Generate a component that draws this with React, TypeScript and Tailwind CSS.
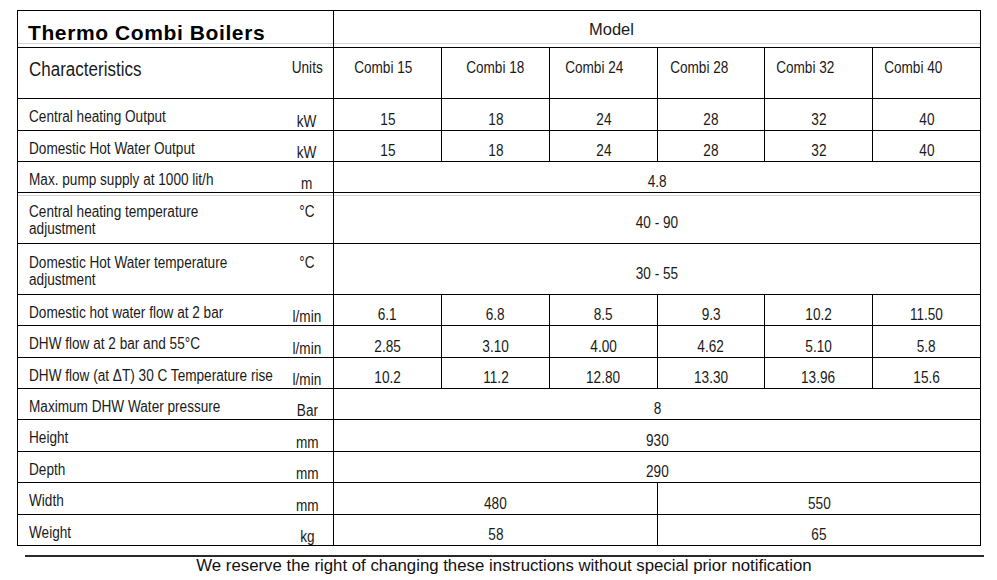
type Cell = [string, number];
type Row = { label: string[]; unit: string; cells: Cell[] };

const each = (vals: string[]): Cell[] => vals.map((v) => [v, 1] as Cell);

const rows: Row[] = [
  { label: ['Central heating Output'], unit: 'kW', cells: each(['15', '18', '24', '28', '32', '40']) },
  { label: ['Domestic Hot Water Output'], unit: 'kW', cells: each(['15', '18', '24', '28', '32', '40']) },
  { label: ['Max. pump supply at 1000 lit/h'], unit: 'm', cells: [['4.8', 6]] },
  { label: ['Central heating temperature', 'adjustment'], unit: '°C', cells: [['40 - 90', 6]] },
  { label: ['Domestic Hot Water temperature', 'adjustment'], unit: '°C', cells: [['30 - 55', 6]] },
  { label: ['Domestic hot water flow at 2 bar'], unit: 'l/min', cells: each(['6.1', '6.8', '8.5', '9.3', '10.2', '11.50']) },
  { label: ['DHW flow at 2 bar and 55°C'], unit: 'l/min', cells: each(['2.85', '3.10', '4.00', '4.62', '5.10', '5.8']) },
  { label: ['DHW flow (at ΔT) 30 C Temperature rise'], unit: 'l/min', cells: each(['10.2', '11.2', '12.80', '13.30', '13.96', '15.6']) },
  { label: ['Maximum DHW Water pressure'], unit: 'Bar', cells: [['8', 6]] },
  { label: ['Height'], unit: 'mm', cells: [['930', 6]] },
  { label: ['Depth'], unit: 'mm', cells: [['290', 6]] },
  { label: ['Width'], unit: 'mm', cells: [['480', 3], ['550', 3]] },
  { label: ['Weight'], unit: 'kg', cells: [['58', 3], ['65', 3]] },
];

const spanClass: Record<number, string> = { 1: '', 3: 'col-span-3', 6: 'col-span-6' };

const models = [
  { name: 'Combi 15', cls: 'pr-[9px]' },
  { name: 'Combi 18', cls: 'pr-[0px]' },
  { name: 'Combi 24', cls: 'pr-[18px]' },
  { name: 'Combi 28', cls: 'pr-[24px]' },
  { name: 'Combi 32', cls: 'pr-[26px]' },
  { name: 'Combi 40', cls: 'pr-[26px]' },
];

const gapLine = 'shadow-[inset_0_2px_0_#fff,inset_0_3px_0_#d4d4d4]';

// the sheet uses a condensed Arial; squeeze Liberation Sans to match
function Narrow({ children, left }: { children: React.ReactNode; left?: boolean }) {
  return (
    <span className={`inline-block whitespace-nowrap scale-x-[0.85] ${left ? 'origin-left' : 'origin-center'}`}>
      {children}
    </span>
  );
}

export default function App() {
  return (
    <div className="w-[997px] h-[580px] bg-white text-[#1a1a1a] overflow-hidden font-['Liberation_Sans',Arial,sans-serif]">
      <div className="pt-[10px] pl-[17px]">
        <div className="w-[964px] grid gap-px bg-black border border-black grid-cols-[315px_107px_107px_107px_106px_107px_107px] grid-rows-[36px_50px_31px_30px_30px_50px_50px_30px_31px_30px_30px_31px_30px_31px_30px]">
          {/* title row */}
          <div className="bg-white pl-[10px] pt-[11px] shadow-[inset_0_-3px_0_#fff,inset_0_-4px_0_#d4d4d4]">
            <div className="font-bold text-[21px] leading-[21px] tracking-[0.6px] text-black">Thermo Combi Boilers</div>
          </div>
          <div className="col-span-6 bg-white pt-[10px] text-center pr-[91px] shadow-[inset_0_-3px_0_#fff,inset_0_-4px_0_#d4d4d4]">
            <div className="text-[16.5px] leading-[16px]">Model</div>
          </div>

          {/* header row */}
          <div className="bg-white flex pl-[11px]">
            <div className="flex-1 min-w-0 pt-[11px] text-[20px] leading-[20px]">
              <Narrow left>Characteristics</Narrow>
            </div>
            <div className="w-[52px] shrink-0 text-center pt-[12px] text-[16px] leading-[16px]">
              <Narrow>Units</Narrow>
            </div>
          </div>
          {models.map((m) => (
            <div key={m.name} className={`bg-white text-center pt-[12px] text-[16px] leading-[16px] ${m.cls}`}>
              <Narrow>{m.name}</Narrow>
            </div>
          ))}

          {/* data rows */}
          {rows.map((r, i) => {
            const tall = r.label.length > 1;
            const extra = i === 3 ? gapLine : '';
            return [
              <div key={`l${i}`} className={`bg-white flex pl-[11px] text-[16px] ${extra}`}>
                <div className={`flex-1 min-w-0 self-center ${tall ? 'pt-[3px] leading-[17px]' : 'pt-[5px] leading-[16px]'}`}>
                  {r.label.map((t) => (
                    <div key={t}>
                      <Narrow left>{t}</Narrow>
                    </div>
                  ))}
                </div>
                <div className={`w-[52px] shrink-0 text-center leading-[16px] ${tall ? 'self-start mt-[11px]' : 'self-end'}`}>
                  <Narrow>{r.unit}</Narrow>
                </div>
              </div>,
              ...r.cells.map(([v, span], j) => (
                <div
                  key={`v${i}-${j}`}
                  className={`bg-white flex items-center justify-center pt-[10px] text-[16px] leading-[16px] ${spanClass[span]} ${extra}`}
                >
                  <Narrow>{v}</Narrow>
                </div>
              )),
            ];
          })}
        </div>
      </div>

      {/* footer */}
      <div className="ml-[25px] mt-[9px] w-[959px] h-[2px] bg-[#2a2a2a]" />
      <div className="mt-[1px] pl-[11px] text-center text-[16.8px] leading-[16px] text-[#111]">
        We reserve the right of changing these instructions without special prior notification
      </div>
    </div>
  );
}
